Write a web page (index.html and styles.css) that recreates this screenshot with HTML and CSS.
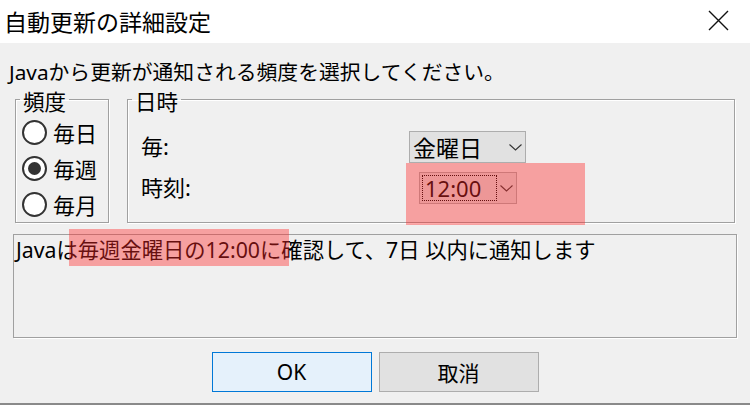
FILE: index.html
```html
<!DOCTYPE html>
<html lang="ja">
<head>
<meta charset="utf-8">
<title>自動更新の詳細設定</title>
<link rel="stylesheet" href="styles.css">
</head>
<body>
<div class="window">
  <header class="titlebar">
    <span class="title">自動更新の詳細設定</span>
    <svg class="close" width="21" height="21" viewBox="0 0 21 21" aria-hidden="true">
      <path d="M1 1 L20 20 M20 1 L1 20"></path>
    </svg>
  </header>
  <main class="dialog">
    <p class="intro">Javaから更新が通知される頻度を選択してください。</p>
    <div class="groups">
      <fieldset class="group freq">
        <legend class="legend">頻度</legend>
        <div class="freq-body">
          <label class="radio"><span class="circle"></span><span class="rlabel">毎日</span></label>
          <label class="radio"><span class="circle checked"></span><span class="rlabel">毎週</span></label>
          <label class="radio"><span class="circle"></span><span class="rlabel">毎月</span></label>
        </div>
      </fieldset>
      <fieldset class="group when">
        <legend class="legend">日時</legend>
        <div class="form-grid">
          <span class="flabel">毎:</span>
          <div class="select day">
            <span class="value">金曜日</span>
            <svg class="chev" width="13" height="7" viewBox="0 0 13 7" aria-hidden="true"><polyline points="0.5,0.5 6.5,6 12.5,0.5"></polyline></svg>
          </div>
          <span class="flabel">時刻:</span>
          <div class="select time">
            <span class="value focus">12:00</span>
            <svg class="chev" width="13" height="7" viewBox="0 0 13 7" aria-hidden="true"><polyline points="0.5,0.5 6.5,6 12.5,0.5"></polyline></svg>
          </div>
        </div>
      </fieldset>
    </div>
    <div class="summary">Javaは毎週金曜日の12:00に確認して、7日 以内に通知します</div>
    <div class="buttons">
      <button class="btn ok">OK</button>
      <button class="btn">取消</button>
    </div>
  </main>
  <div class="hl hl-time"></div>
  <div class="hl hl-text"></div>
</div>
</body>
</html>
```

FILE: styles.css
```css
* { box-sizing: border-box; }

html, body {
  margin: 0;
  padding: 0;
}

body {
  width: 750px;
  height: 405px;
  overflow: hidden;
  background: #f0f0f0;
  font-family: "Noto Sans", "Noto Sans CJK JP", sans-serif;
  color: #000;
}

.window {
  position: relative;
  width: 750px;
  height: 405px;
  display: flex;
  flex-direction: column;
}

.titlebar {
  height: 43px;
  flex: none;
  background: #fff;
  display: flex;
  align-items: center;
  justify-content: space-between;
  padding: 0 21px 2px 4px;
}

.title {
  font-size: 23px;
  line-height: 30px;
  font-family: "Noto Sans CJK JP", sans-serif;
}

.close {
  display: block;
}

.close path {
  stroke: #111;
  stroke-width: 1.4;
  fill: none;
}

.dialog {
  flex: 1;
  background: #f0f0f0;
  border-bottom: 2px solid #8a8a8a;
  display: flex;
  flex-direction: column;
}

.intro {
  margin: 0;
  padding: 17px 0 0 9px;
  font-size: 20.8px;
  line-height: 25px;
}

.groups {
  display: flex;
  gap: 18px;
  margin-left: 15px;
}

.group {
  margin: 0;
  padding: 0;
  border: 1px solid #a0a0a0;
  box-shadow: 1px 1px 0 #fff, inset 1px 1px 0 #fff;
  height: 138px;
  min-inline-size: 0;
}

.legend {
  margin-left: 4px;
  padding: 4px 3px 0;
  font-size: 21.5px;
  line-height: 24px;
  font-family: "Noto Sans CJK JP", sans-serif;
}

.freq {
  width: 94px;
}

.freq-body {
  padding: 1px 0 0 6px;
}

.radio {
  display: flex;
  align-items: center;
  height: 36px;
  gap: 6px;
}

.circle {
  width: 25px;
  height: 25px;
  flex: none;
  border: 2px solid #333;
  border-radius: 50%;
  background: #fff;
  display: flex;
  align-items: center;
  justify-content: center;
}

.circle.checked::after {
  content: "";
  width: 13px;
  height: 13px;
  border-radius: 50%;
  background: #333;
}

.rlabel {
  font-size: 22px;
  line-height: 28px;
  font-family: "Noto Sans CJK JP", sans-serif;
}

.when {
  width: 608px;
}

.form-grid {
  display: grid;
  grid-template-columns: 268px auto;
  grid-auto-rows: 32px;
  row-gap: 9px;
  align-items: center;
  justify-items: start;
  padding: 18px 0 0 13px;
}

.flabel {
  font-size: 22px;
  line-height: 28px;
  padding-bottom: 2px;
}

.select {
  height: 32px;
  background: #e1e1e1;
  border: 1px solid #adadad;
  display: flex;
  align-items: center;
  justify-content: space-between;
}

.select .value {
  font-size: 22px;
  line-height: 28px;
}

.chev polyline {
  fill: none;
  stroke: #333;
  stroke-width: 1.1;
}

.day {
  width: 117px;
  padding: 0 3px 0 3px;
}

.day .value {
  font-family: "Noto Sans CJK JP", sans-serif;
  font-size: 23px;
}

.time {
  width: 98px;
  margin-left: 10px;
  padding: 2px 3px 2px 2px;
  align-items: stretch;
}

.time .chev {
  align-self: center;
}

.focus {
  width: 75px;
  border: 1px dotted #000;
  display: flex;
  align-items: center;
  padding-left: 2px;
  font-size: 20px;
}

.summary {
  margin: 11px 0 0 13px;
  width: 724px;
  height: 104px;
  border: 1px solid #a0a0a0;
  box-shadow: 1px 1px 0 #fff;
  padding: 1px 0 0 2px;
  font-size: 21.3px;
  line-height: 28px;
}

.buttons {
  display: flex;
  justify-content: center;
  gap: 7px;
  margin-top: 14px;
}

.btn {
  width: 160px;
  height: 40px;
  margin: 0;
  padding: 0;
  background: #e1e1e1;
  border: 1px solid #adadad;
  font-family: "Noto Sans", "Noto Sans CJK JP", sans-serif;
  font-size: 21px;
  color: #000;
}

.btn.ok {
  background: #e5f1fb;
  border-color: #0078d7;
}

.hl {
  position: absolute;
  background: rgba(255, 40, 40, 0.4);
}

.hl-time {
  left: 406px;
  top: 163px;
  width: 179px;
  height: 62px;
}

.hl-text {
  left: 69px;
  top: 229px;
  width: 220px;
  height: 37px;
}
```
